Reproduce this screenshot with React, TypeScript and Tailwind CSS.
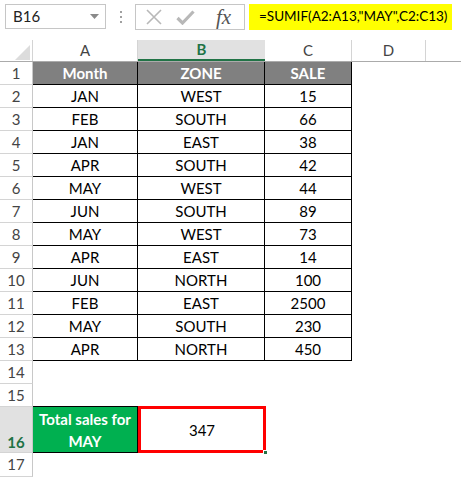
const rows: [string, string, string][] = [
  ['JAN', 'WEST', '15'],
  ['FEB', 'SOUTH', '66'],
  ['JAN', 'EAST', '38'],
  ['APR', 'SOUTH', '42'],
  ['MAY', 'WEST', '44'],
  ['JUN', 'SOUTH', '89'],
  ['MAY', 'WEST', '73'],
  ['APR', 'EAST', '14'],
  ['JUN', 'NORTH', '100'],
  ['FEB', 'EAST', '2500'],
  ['MAY', 'SOUTH', '230'],
  ['APR', 'NORTH', '450'],
];

function RowHead({ n, tall }: { n: number; tall?: boolean }) {
  return (
    <div
      className={
        tall
          ? 'flex w-[33px] shrink-0 items-end justify-center border-r border-b border-r-[#c8c8c8] border-b-[#d4d4d4] bg-[#e1e1e1] pb-[2px] font-bold text-[#217346]'
          : 'flex w-[33px] shrink-0 items-center justify-center border-r border-b border-r-[#c8c8c8] border-b-[#d4d4d4] text-[#444]'
      }
    >
      {n}
    </div>
  );
}

function FormulaBar() {
  return (
    <div className="flex h-[40px] items-start bg-white pt-[4px]">
      <div className="ml-[5px] flex h-[25px] w-[101px] items-center justify-between border border-[#c6c6c6] pl-[7px] pr-[6px] text-[#222]">
        <span>B16</span>
        <svg width="9" height="5" viewBox="0 0 9 5">
          <path d="M0 0h9L4.5 5z" fill="#8a8a8a" />
        </svg>
      </div>
      <div className="ml-[14px] mt-[7px] flex w-[3px] flex-col gap-[3px]">
        <span className="h-[2px] w-[2px] bg-[#a0a0a0]" />
        <span className="h-[2px] w-[2px] bg-[#a0a0a0]" />
        <span className="h-[2px] w-[2px] bg-[#a0a0a0]" />
      </div>
      <div className="ml-[12px] flex h-[26px] w-[110px] items-center border border-[#c6c6c6] pl-[10px]">
        <svg width="16" height="16" viewBox="0 0 16 16">
          <path d="M1 1L15 15M15 1L1 15" stroke="#b8b8b8" strokeWidth="1.6" fill="none" />
        </svg>
        <svg className="ml-[14px]" width="19" height="15" viewBox="0 0 19 15">
          <path d="M1.5 8L6.5 13L17.5 1.5" stroke="#b8b8b8" strokeWidth="3.2" fill="none" strokeLinejoin="miter" />
        </svg>
        <span
          className="ml-[21px] text-[21px] italic leading-none text-[#555]"
          style={{ fontFamily: '"Liberation Serif", "DejaVu Serif", serif' }}
        >
          fx
        </span>
      </div>
      <div className="ml-[4px] flex h-[26px] w-[203px] items-center whitespace-nowrap bg-[#ffff00] pl-[10px] text-[13.5px] text-black">
        =SUMIF(A2:A13,&quot;MAY&quot;,C2:C13)
      </div>
    </div>
  );
}

function ColumnHeads() {
  return (
    <div className="flex h-[22px] border-b border-[#ababab] text-[#444]">
      <div className="relative w-[33px] shrink-0 border-r border-[#d4d4d4]">
        <svg className="absolute left-[15px] top-[5px]" width="15" height="15" viewBox="0 0 15 15">
          <path d="M15 0V15H0z" fill="#dcdcdc" />
        </svg>
      </div>
      <div className="flex w-[105px] shrink-0 items-center justify-center border-r border-[#d4d4d4]">A</div>
      <div className="flex w-[127px] shrink-0 items-center justify-center border-b-2 border-[#217346] bg-[#e1e1e1] font-bold text-[#217346]">
        B
      </div>
      <div className="flex w-[87px] shrink-0 items-center justify-center border-r border-[#d4d4d4]">C</div>
      <div className="flex w-[74px] shrink-0 items-center justify-center border-r border-[#d4d4d4]">D</div>
      <div className="flex-1" />
    </div>
  );
}

export default function App() {
  return (
    <div
      className="h-[477px] w-[461px] overflow-hidden bg-white text-[15px] leading-none"
      style={{ fontFamily: 'Lato, "Liberation Sans", sans-serif' }}
    >
      <FormulaBar />
      <ColumnHeads />
      <div className="flex h-[23px]">
        <RowHead n={1} />
        <div className="flex w-[105px] shrink-0 items-center justify-center border-r border-b border-black bg-[#808080] font-bold text-white">
          Month
        </div>
        <div className="flex w-[127px] shrink-0 items-center justify-center border-r border-b border-black bg-[#808080] font-bold text-white">
          ZONE
        </div>
        <div className="flex w-[87px] shrink-0 items-center justify-center border-r border-b border-black bg-[#808080] font-bold text-white">
          SALE
        </div>
      </div>
      {rows.map(([month, zone, sale], i) => (
        <div key={i} className="flex h-[23px] text-black">
          <RowHead n={i + 2} />
          <div className="flex w-[105px] shrink-0 items-center justify-center border-r border-b border-black">{month}</div>
          <div className="flex w-[127px] shrink-0 items-center justify-center border-r border-b border-black">{zone}</div>
          <div className="flex w-[87px] shrink-0 items-center justify-center border-r border-b border-black">{sale}</div>
        </div>
      ))}
      <div className="flex h-[23px]">
        <RowHead n={14} />
      </div>
      <div className="flex h-[23px]">
        <RowHead n={15} />
      </div>
      <div className="flex h-[46px]">
        <RowHead n={16} tall />
        <div className="-mt-px flex h-[47px] w-[105px] shrink-0 items-center justify-center border border-l-0 border-black bg-[#00b050] px-[2px] text-center font-bold leading-[22px] text-white">
          Total sales for MAY
        </div>
        <div className="relative flex w-[128px] shrink-0 items-center justify-center text-black">
          347
          <div className="absolute -top-px left-0 right-0 bottom-0 border-[3px] border-[#ff0000]" />
          <div className="absolute -bottom-[2px] -right-[2px] h-[5px] w-[5px] border border-white bg-[#217346]" />
        </div>
      </div>
      <div className="flex h-[24px]">
        <RowHead n={17} />
      </div>
    </div>
  );
}
